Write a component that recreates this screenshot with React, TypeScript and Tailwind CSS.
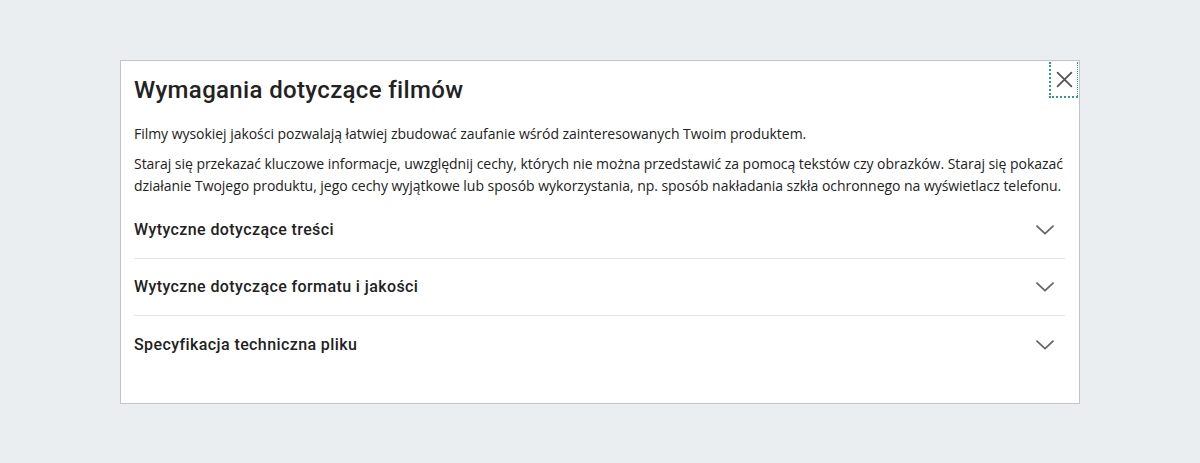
import React from 'react';

const sections = [
  'Wytyczne dotyczące treści',
  'Wytyczne dotyczące formatu i jakości',
  'Specyfikacja techniczna pliku',
];

const Chevron = () => (
  <svg width="18" height="10" viewBox="0 0 18 10" fill="none" className="shrink-0">
    <path d="M1 1.2L9 8.6L17 1.2" stroke="#666666" strokeWidth="1.8" strokeLinecap="round" strokeLinejoin="round" />
  </svg>
);

export default function App() {
  return (
    <div className="min-h-screen w-full bg-[#ebeef1] px-[120px] pt-[60px] font-['Roboto',sans-serif]">
      <div className="relative w-[960px] border border-[#c4c4c4] bg-white pl-[13px] pr-[14px] pt-[13px] pb-[30px]">
        {/* Close */}
        <button className="absolute right-[1px] top-[1px] flex h-[36px] w-[29px] items-center justify-center border-b-2 border-l-2 border-r border-dotted border-[#2a9d8f]">
          <svg width="17" height="17" viewBox="0 0 16 16" fill="none">
            <path d="M1.5 1.5L14.5 14.5M14.5 1.5L1.5 14.5" stroke="#555555" strokeWidth="1.7" strokeLinecap="round" />
          </svg>
        </button>

        <h2 className="text-[24px] leading-[32px] font-medium tracking-[0.35px] text-[#222222]">Wymagania dotyczące filmów</h2>

        <div className="mt-[17px] font-['Open_Sans',sans-serif] text-[14px] leading-[22px] tracking-[-0.04px] text-[#222222]">
          <p className="whitespace-nowrap">Filmy wysokiej jakości pozwalają łatwiej zbudować zaufanie wśród zainteresowanych Twoim produktem.</p>
          <p className="mt-[8px] whitespace-nowrap">
            Staraj się przekazać kluczowe informacje, uwzględnij cechy, których nie można przedstawić za pomocą tekstów czy obrazków. Staraj się pokazać
            <br />
            działanie Twojego produktu, jego cechy wyjątkowe lub sposób wykorzystania, np. sposób nakładania szkła ochronnego na wyświetlacz telefonu.
          </p>
        </div>

        <div className="mt-[5px]">
          {sections.map((s, i) => (
            <div
              key={s}
              className={`flex h-[57px] items-center justify-between pr-[11px] ${
                i < sections.length - 1 ? 'border-b border-[#e3e3e3]' : ''
              }`}
            >
              <span className="text-[16px] leading-[24px] font-medium tracking-[0.4px] text-[#222222]">{s}</span>
              <Chevron />
            </div>
          ))}
        </div>
      </div>
    </div>
  );
}
